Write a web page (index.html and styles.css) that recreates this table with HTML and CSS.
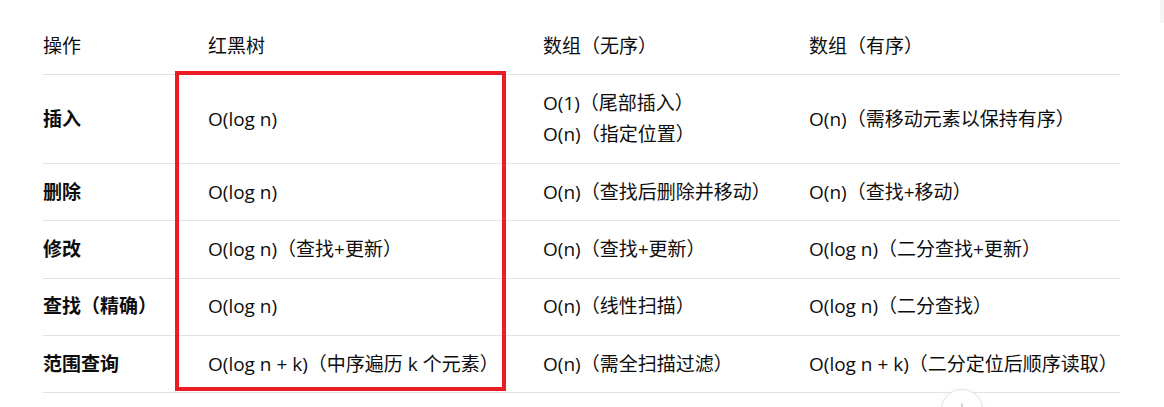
FILE: index.html
```html
<!DOCTYPE html>
<html lang="zh-CN">
<head>
<meta charset="utf-8">
<title>复杂度对比</title>
<link rel="stylesheet" href="styles.css">
</head>
<body>
<div class="page">
  <table class="cmp">
    <colgroup>
      <col class="c1"><col class="c2"><col class="c3"><col class="c4">
    </colgroup>
    <thead>
      <tr><th>操作</th><th>红黑树</th><th>数组（无序）</th><th>数组（有序）</th></tr>
    </thead>
    <tbody>
      <tr>
        <td class="op">插入</td>
        <td>O(log n)</td>
        <td><div class="ln">O(1)（尾部插入）</div><div class="ln second">O(n)（指定位置）</div></td>
        <td>O(n)（需移动元素以保持有序）</td>
      </tr>
      <tr>
        <td class="op">删除</td>
        <td>O(log n)</td>
        <td>O(n)（查找后删除并移动）</td>
        <td>O(n)（查找+移动）</td>
      </tr>
      <tr>
        <td class="op">修改</td>
        <td>O(log n)（查找+更新）</td>
        <td>O(n)（查找+更新）</td>
        <td>O(log n)（二分查找+更新）</td>
      </tr>
      <tr>
        <td class="op">查找（精确）</td>
        <td>O(log n)</td>
        <td>O(n)（线性扫描）</td>
        <td>O(log n)（二分查找）</td>
      </tr>
      <tr>
        <td class="op">范围查询</td>
        <td>O(log n + k)（中序遍历 k 个元素）</td>
        <td>O(n)（需全扫描过滤）</td>
        <td>O(log n + k)（二分定位后顺序读取）</td>
      </tr>
    </tbody>
  </table>
  <div class="highlight"></div>
  <div class="scroll-btn">
    <svg width="16" height="16" viewBox="0 0 16 16"><path d="M8 2v11M3.5 8.5L8 13l4.5-4.5" fill="none" stroke="#c8c8c8" stroke-width="1.5" stroke-linecap="round" stroke-linejoin="round"/></svg>
  </div>
  <div class="edge"></div>
</div>
</body>
</html>
```

FILE: styles.css
```css
html, body {
  margin: 0;
  padding: 0;
  background: #ffffff;
}
body {
  font-family: "Open Sans", "Noto Sans CJK SC", sans-serif;
  color: #0d0d0d;
  font-size: 19px;
}
.page {
  position: relative;
  width: 1164px;
  height: 407px;
  overflow: hidden;
  padding: 18px 0 0 43px;
  box-sizing: border-box;
}
.cmp {
  width: 1077px;
  table-layout: fixed;
  border-collapse: collapse;
}
.c1 { width: 165px; }
.c2 { width: 335px; }
.c3 { width: 266px; }
.c4 { width: 311px; }
.cmp th,
.cmp td {
  text-align: left;
  vertical-align: middle;
  padding: 13.67px 0;
  line-height: 29px;
  border-bottom: 1px solid #e3e3e3;
  white-space: nowrap;
}
.cmp th {
  font-weight: 400;
}
.cmp td.op {
  font-weight: 700;
}
.ln.second {
  margin-top: 2.3px;
}
.highlight {
  position: absolute;
  left: 175px;
  top: 71px;
  width: 331px;
  height: 320px;
  box-sizing: border-box;
  border: 4px solid #ec1c24;
}
.scroll-btn {
  position: absolute;
  left: 941px;
  top: 389px;
  width: 42px;
  height: 42px;
  box-sizing: border-box;
  border: 1px solid #e2e2e2;
  border-radius: 50%;
  background: #ffffff;
  box-shadow: 0 0 6px rgba(0, 0, 0, 0.04);
  display: flex;
  justify-content: center;
  padding-top: 12px;
}
.edge {
  position: absolute;
  right: 0;
  top: 0;
  width: 4px;
  height: 23px;
  background: #f5f5f5;
}
```
